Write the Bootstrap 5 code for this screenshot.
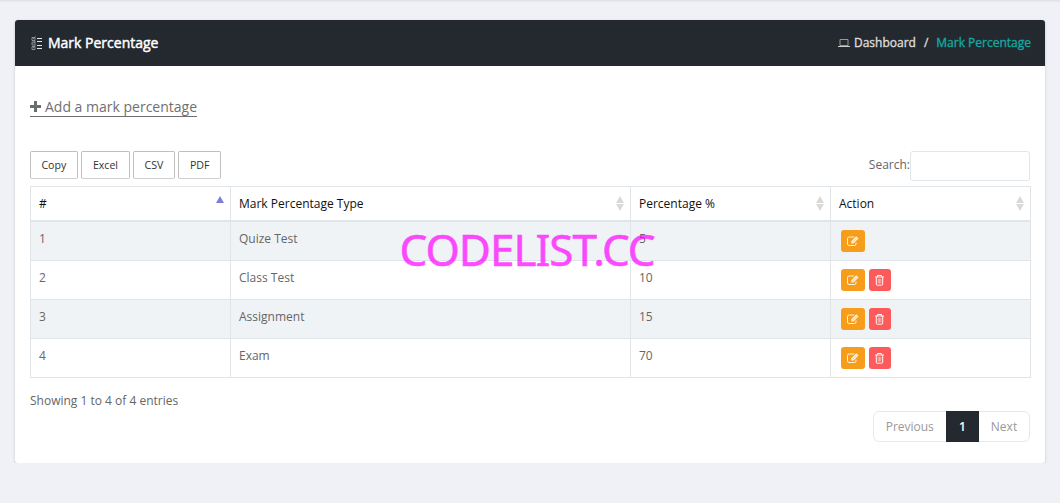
<!DOCTYPE html>
<html lang="en">
<head>
<meta charset="utf-8">
<meta name="viewport" content="width=device-width, initial-scale=1">
<title>Mark Percentage</title>
<link href="https://cdn.jsdelivr.net/npm/bootstrap@5.3.0/dist/css/bootstrap.min.css" rel="stylesheet">
<style>
  body { background: #f0f1f7; font-family: "Open Sans", "Noto Sans", sans-serif; font-size: 12px; line-height: 18px; color: #666; overflow: hidden; }
  .topline { height: 2px; background: linear-gradient(#dfe0e6, #eaebf1); }
  .panel { margin: 18px 15px 0; height: 443px; border-radius: 3px; box-shadow: 0 1px 3px rgba(0,0,0,.18); }
  .panel-head { height: 46px; padding: 0 14px 0 15px; background: #242930; border-radius: 3px 3px 0 0; }
  .panel-title { font-size: 14px; color: #fff; -webkit-text-stroke: .45px #fff; }
  .crumbs { color: #ddd; -webkit-text-stroke: .35px currentColor; }
  .crumbs .slash { padding: 0 8px; }
  .crumbs .here { color: #11a8a0; }
  .panel-main { padding: 0 15px; }
  .add-link { font-size: 14px; line-height: 19px; color: #707070; border-bottom: 1px solid #707070; margin-top: 31px; height: 20px; }
  .tools { margin-top: 34px; height: 35px; }
  .export-group { gap: 3.6px; }
  .export-btn { height: 28px; padding: 0; font-size: 10.6px; line-height: 26px; color: #333; background: #fff; border: 1px solid #bfbfbf; border-bottom-color: #d0d0d0; border-radius: 2px; }
  .search-text { padding-bottom: 2px; }
  .search-box { width: 120px; height: 30px; border: 1px solid #e1e6ea; border-radius: 3px; }
  .marks { width: 1001px; table-layout: fixed; border-collapse: collapse; margin: 0; }
  .marks th, .marks td { border: 1px solid #e0e5ea; padding: 0 8px; vertical-align: top; }
  .marks th { height: 34px; font-weight: 400; color: #111; padding-top: 8px; border-bottom-width: 2px; }
  .marks td { height: 39px; padding-top: 8px; color: #666; }
  .marks tbody tr:first-child td { height: 40px; }
  .marks tbody tr:nth-child(odd) { background: #eff3f6; }
  .sorter { position: absolute; right: -2px; top: 1px; }
  .acts { padding-left: 2px; }
  .act { height: 22px; border-radius: 3px; }
  .act-edit { width: 24px; background: #f69d1b; }
  .act-del { width: 21.500px; background: #fd5b5b; }
  .info { margin-top: 14px; }
  .pages { height: 31px; margin-top: 1px; }
  .pages .page-link { height: 31px; padding: 0; font-size: 12px; line-height: 29px; text-align: center; color: #999; background: #fff; border-color: #e6e9ec; box-shadow: none; }
  .pages .active .page-link { background: #242930; border-color: #242930; color: #fff; font-weight: 600; }
  .stamp { position: absolute; left: 399.500px; top: 219px; font: 44px/60px "Noto Sans", sans-serif; letter-spacing: -1px; -webkit-text-stroke: .6px #f0f; color: #ff00ff; opacity: .7; white-space: nowrap; pointer-events: none; }
</style>
</head>
<body>
<svg class="d-none">
  <symbol id="i-edit" viewBox="0 0 14 12"><path d="M8.300 2H3Q1.500 2 1.500 3.500V9Q1.500 10.500 3 10.500H8.500Q10 10.500 10 9V7.500" fill="none" stroke="#fff" stroke-width="1" opacity=".85"/><path d="M5.300 8.500V6.300L10.300 1.300 12.500 3.500 7.500 8.500Z" fill="#fff" opacity=".9"/><path d="M6.300 7.500L10.800 3" stroke="#f69d1b" stroke-width=".5"/></symbol>
  <symbol id="i-trash" viewBox="0 0 11 12"><path d="M1 3H10M3.500 3V1.500H7.500V3M2.300 3V10Q2.300 11.200 3.300 11.200H7.700Q8.700 11.200 8.700 10V3" fill="none" stroke="#fff" stroke-width=".95"/><path d="M4.200 4.800V9.500M5.500 4.800V9.500M6.800 4.800V9.500" stroke="#fff" stroke-width=".6" opacity=".9"/></symbol>
  <symbol id="i-sort" viewBox="0 0 8 15"><path d="M4 0L8 7H0ZM0 8H8L4 15Z" fill="#d9d9d9"/></symbol>
</svg>
<div class="topline"></div>
<main class="panel bg-white">
  <header class="panel-head d-flex justify-content-between align-items-center">
    <div class="panel-title d-flex align-items-center">
      <svg width="14" height="15" viewBox="0 0 14 15" class="me-1"><g fill="none" stroke="#a5a7a9" stroke-width=".8"><path d="M2 1.500H5V4.500H2ZM2 6H5V9H2ZM2 10.500H5V13.500H2ZM3 3L5.500 .5M3 7.500L5.500 5M3 12L5.500 9.500"/></g><path d="M7 2.500H12M7 5.500H12M7 9.500H12M7 12.500H12" stroke="#e0e2e3" stroke-width="1"/></svg>
      <span class="title-text">Mark Percentage</span>
    </div>
    <nav class="crumbs d-flex align-items-center">
      <svg width="12" height="10" viewBox="0 0 12 10" class="me-1"><path d="M2 1.500H10V7.500H2Z" fill="none" stroke="#999" stroke-width="1"/><path d="M0 8.500H12" stroke="#ccc"/></svg>
      <span>Dashboard</span><span class="slash">/</span><span class="here">Mark Percentage</span>
    </nav>
  </header>
  <div class="panel-main d-flex flex-column align-items-start">
    <a class="add-link d-inline-flex align-items-center text-decoration-none" href="#"><svg width="11" height="11" viewBox="0 0 11 11" class="me-1"><path d="M4 0H7V4H11V7H7V11H4V7H0V4H4Z" fill="#6c6c6c"/></svg><span>Add a mark percentage</span></a>
    <div class="tools w-100 d-flex justify-content-between align-items-start">
      <div class="export-group d-flex">
        <button class="export-btn" style="width:47.7px">Copy</button><button class="export-btn" style="width:48.4px">Excel</button><button class="export-btn" style="width:41.5px">CSV</button><button class="export-btn" style="width:42.6px">PDF</button>
      </div>
      <label class="d-flex align-items-center"><span class="search-text">Search:</span><input class="search-box" type="text"></label>
    </div>
    <table class="marks">
      <colgroup><col style="width:200px"><col style="width:400px"><col style="width:200px"><col style="width:200px"></colgroup>
      <thead><tr>
        <th><div class="position-relative">#<svg class="sorter" width="8" height="15" viewBox="0 0 8 15"><path d="M4 0L8 7H0Z" fill="#7b80dc"/></svg></div></th>
        <th><div class="position-relative">Mark Percentage Type<svg class="sorter" width="8" height="15"><use href="#i-sort"/></svg></div></th>
        <th><div class="position-relative">Percentage %<svg class="sorter" width="8" height="15"><use href="#i-sort"/></svg></div></th>
        <th><div class="position-relative">Action<svg class="sorter" width="8" height="15"><use href="#i-sort"/></svg></div></th>
      </tr></thead>
      <tbody>
        <tr><td>1</td><td>Quize Test</td><td>5</td><td><div class="acts d-flex gap-1"><span class="act act-edit d-flex align-items-center justify-content-center"><svg width="14" height="12"><use href="#i-edit"/></svg></span></div></td></tr>
        <tr><td>2</td><td>Class Test</td><td>10</td><td><div class="acts d-flex gap-1"><span class="act act-edit d-flex align-items-center justify-content-center"><svg width="14" height="12"><use href="#i-edit"/></svg></span><span class="act act-del d-flex align-items-center justify-content-center"><svg width="11" height="12"><use href="#i-trash"/></svg></span></div></td></tr>
        <tr><td>3</td><td>Assignment</td><td>15</td><td><div class="acts d-flex gap-1"><span class="act act-edit d-flex align-items-center justify-content-center"><svg width="14" height="12"><use href="#i-edit"/></svg></span><span class="act act-del d-flex align-items-center justify-content-center"><svg width="11" height="12"><use href="#i-trash"/></svg></span></div></td></tr>
        <tr><td>4</td><td>Exam</td><td>70</td><td><div class="acts d-flex gap-1"><span class="act act-edit d-flex align-items-center justify-content-center"><svg width="14" height="12"><use href="#i-edit"/></svg></span><span class="act act-del d-flex align-items-center justify-content-center"><svg width="11" height="12"><use href="#i-trash"/></svg></span></div></td></tr>
      </tbody>
    </table>
    <div class="info">Showing 1 to 4 of 4 entries</div>
    <ul class="pagination pages align-self-end mb-0">
      <li class="page-item disabled"><a class="page-link" style="width:74.500px">Previous</a></li>
      <li class="page-item active"><a class="page-link" style="width:33px">1</a></li>
      <li class="page-item disabled"><a class="page-link" style="width:52px">Next</a></li>
    </ul>
  </div>
</main>
<div class="stamp">CODELIST.CC</div>
</body>
</html>
